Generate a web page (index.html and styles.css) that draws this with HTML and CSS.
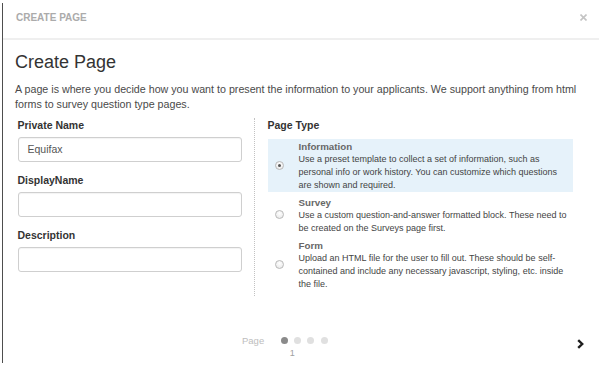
FILE: index.html
```html
<!DOCTYPE html>
<html lang="en">
<head>
  <meta charset="UTF-8" />
  <title>Create Page</title>
  <link rel="stylesheet" href="styles.css">
</head>
<body>
  <div class="modal">
    <div class="modal-header">
      <span class="modal-title">CREATE PAGE</span>
      <svg class="close" width="7" height="7" viewBox="0 0 7 7">
        <path d="M0.5 0.5 L6.5 6.5 M6.5 0.5 L0.5 6.5" stroke="#c4c4c4" stroke-width="1.6" />
      </svg>
    </div>

    <div class="modal-body">
      <h3>Create Page</h3>
      <p class="intro">A page is where you decide how you want to present the information to your applicants. We support anything from html forms to survey question type pages.</p>

      <div class="row">
        <div class="col-left">
          <div class="form-group">
            <label>Private Name</label>
            <div class="input">Equifax</div>
          </div>
          <div class="form-group">
            <label>DisplayName</label>
            <div class="input"></div>
          </div>
          <div class="form-group">
            <label>Description</label>
            <div class="input"></div>
          </div>
        </div>

        <div class="col-right">
          <label>Page Type</label>
          <div class="type-list">
            <div class="type-item selected">
              <span class="radio checked"></span>
              <div class="type-text">
                <div class="type-title">Information</div>
                <div class="type-desc">Use a preset template to collect a set of information, such as personal info or work history. You can customize which questions are shown and required.</div>
              </div>
            </div>
            <div class="type-item">
              <span class="radio"></span>
              <div class="type-text">
                <div class="type-title">Survey</div>
                <div class="type-desc">Use a custom question-and-answer formatted block. These need to be created on the Surveys page first.</div>
              </div>
            </div>
            <div class="type-item">
              <span class="radio"></span>
              <div class="type-text">
                <div class="type-title">Form</div>
                <div class="type-desc">Upload an HTML file for the user to fill out. These should be self-contained and include any necessary javascript, styling, etc. inside the file.</div>
              </div>
            </div>
          </div>
        </div>
      </div>

      <div class="pager">
        <span class="pager-label">Page</span>
        <div class="pager-steps">
          <div class="dots">
            <span class="dot active"></span>
            <span class="dot"></span>
            <span class="dot"></span>
            <span class="dot"></span>
          </div>
          <div class="page-num">1</div>
        </div>
        <svg class="next" width="7" height="10" viewBox="0 0 7 10">
          <path d="M1.2 1.2 L5.2 5 L1.2 8.8" fill="none" stroke="#1e1e1e" stroke-width="2.4" />
        </svg>
      </div>
    </div>
  </div>
</body>
</html>
```

FILE: styles.css
```css
* {
  margin: 0;
  padding: 0;
  box-sizing: border-box;
  font-family: 'Liberation Sans', Arial, sans-serif;
}

body {
  background: #fff;
  color: #444;
}

.modal {
  margin: 3px 0 0 2px;
  height: 360px;
  border-left: 1px solid #4e4e4e;
  background: #fff;
}

.modal-header {
  height: 37px;
  padding: 9px 12.5px 0 13px;
  display: flex;
  justify-content: space-between;
  align-items: flex-start;
  border-bottom: 2px solid #efefef;
}

.modal-title {
  font-size: 10px;
  line-height: 12px;
  font-weight: bold;
  color: #ababab;
}

.close {
  margin-top: 2px;
}

.modal-body {
  padding: 12px 12px 0 12px;
}

h3 {
  font-size: 18px;
  line-height: 20px;
  font-weight: normal;
  color: #333;
  margin-bottom: 9.6px;
}

.intro {
  font-size: 10.7px;
  line-height: 15px;
  color: #4a4a4a;
  width: 575px;
  margin-bottom: 6px;
}

.row {
  display: flex;
}

label {
  display: block;
  font-size: 10.5px;
  line-height: 15px;
  font-weight: bold;
  color: #333;
}

.col-left {
  width: 239px;
  padding: 0 12.5px 0 2.5px;
}

.form-group {
  margin-bottom: 10.5px;
}

.form-group label {
  margin-bottom: 4px;
}

.input {
  height: 25.5px;
  border: 1px solid #cfcfcf;
  border-radius: 3px;
  box-shadow: inset 0 1px 1px rgba(0, 0, 0, 0.05);
  padding: 0 9px;
  font-size: 10.5px;
  line-height: 23.5px;
  color: #555;
}

.col-right {
  flex: 1;
  height: 178px;
  border-left: 1px dotted #c2c2c2;
  padding-left: 12.5px;
}

.type-list {
  margin-top: 6.5px;
  width: 305px;
}

.type-item {
  display: flex;
  align-items: center;
  padding-top: 1px;
  margin-bottom: 3px;
}

.type-item.selected {
  background: #e6f2fa;
}

.radio {
  flex: none;
  width: 9px;
  height: 9px;
  margin: 0 14.5px 2px 7.5px;
  border-radius: 50%;
  border: 1px solid #b9b9b9;
  background: radial-gradient(circle at 50% 35%, #fff, #e6e6e6);
  display: flex;
  align-items: center;
  justify-content: center;
}

.radio.checked::after {
  content: '';
  width: 3px;
  height: 3px;
  border-radius: 50%;
  background: #555;
}

.type-text {
  width: 272px;
}

.type-title {
  font-size: 9.75px;
  line-height: 13px;
  font-weight: bold;
  color: #676767;
}

.type-desc {
  font-size: 9px;
  line-height: 13px;
  color: #444;
}

.pager {
  display: flex;
  align-items: flex-start;
  padding: 39px 3.5px 0 227px;
}

.pager-label {
  font-size: 9.5px;
  line-height: 12px;
  color: #bdbdbd;
  margin-right: 16.5px;
}

.pager-steps {
  margin-top: 2.5px;
}

.dots {
  display: flex;
  gap: 6.3px;
}

.dot {
  width: 7px;
  height: 7px;
  border-radius: 50%;
  background: #e0e0e0;
}

.dot.active {
  background: #8a8a8a;
}

.page-num {
  margin-top: 3px;
  padding-left: 9px;
  font-size: 9px;
  line-height: 12px;
  color: #a0a0a0;
}

.next {
  margin-left: auto;
  margin-top: 4px;
}
```
